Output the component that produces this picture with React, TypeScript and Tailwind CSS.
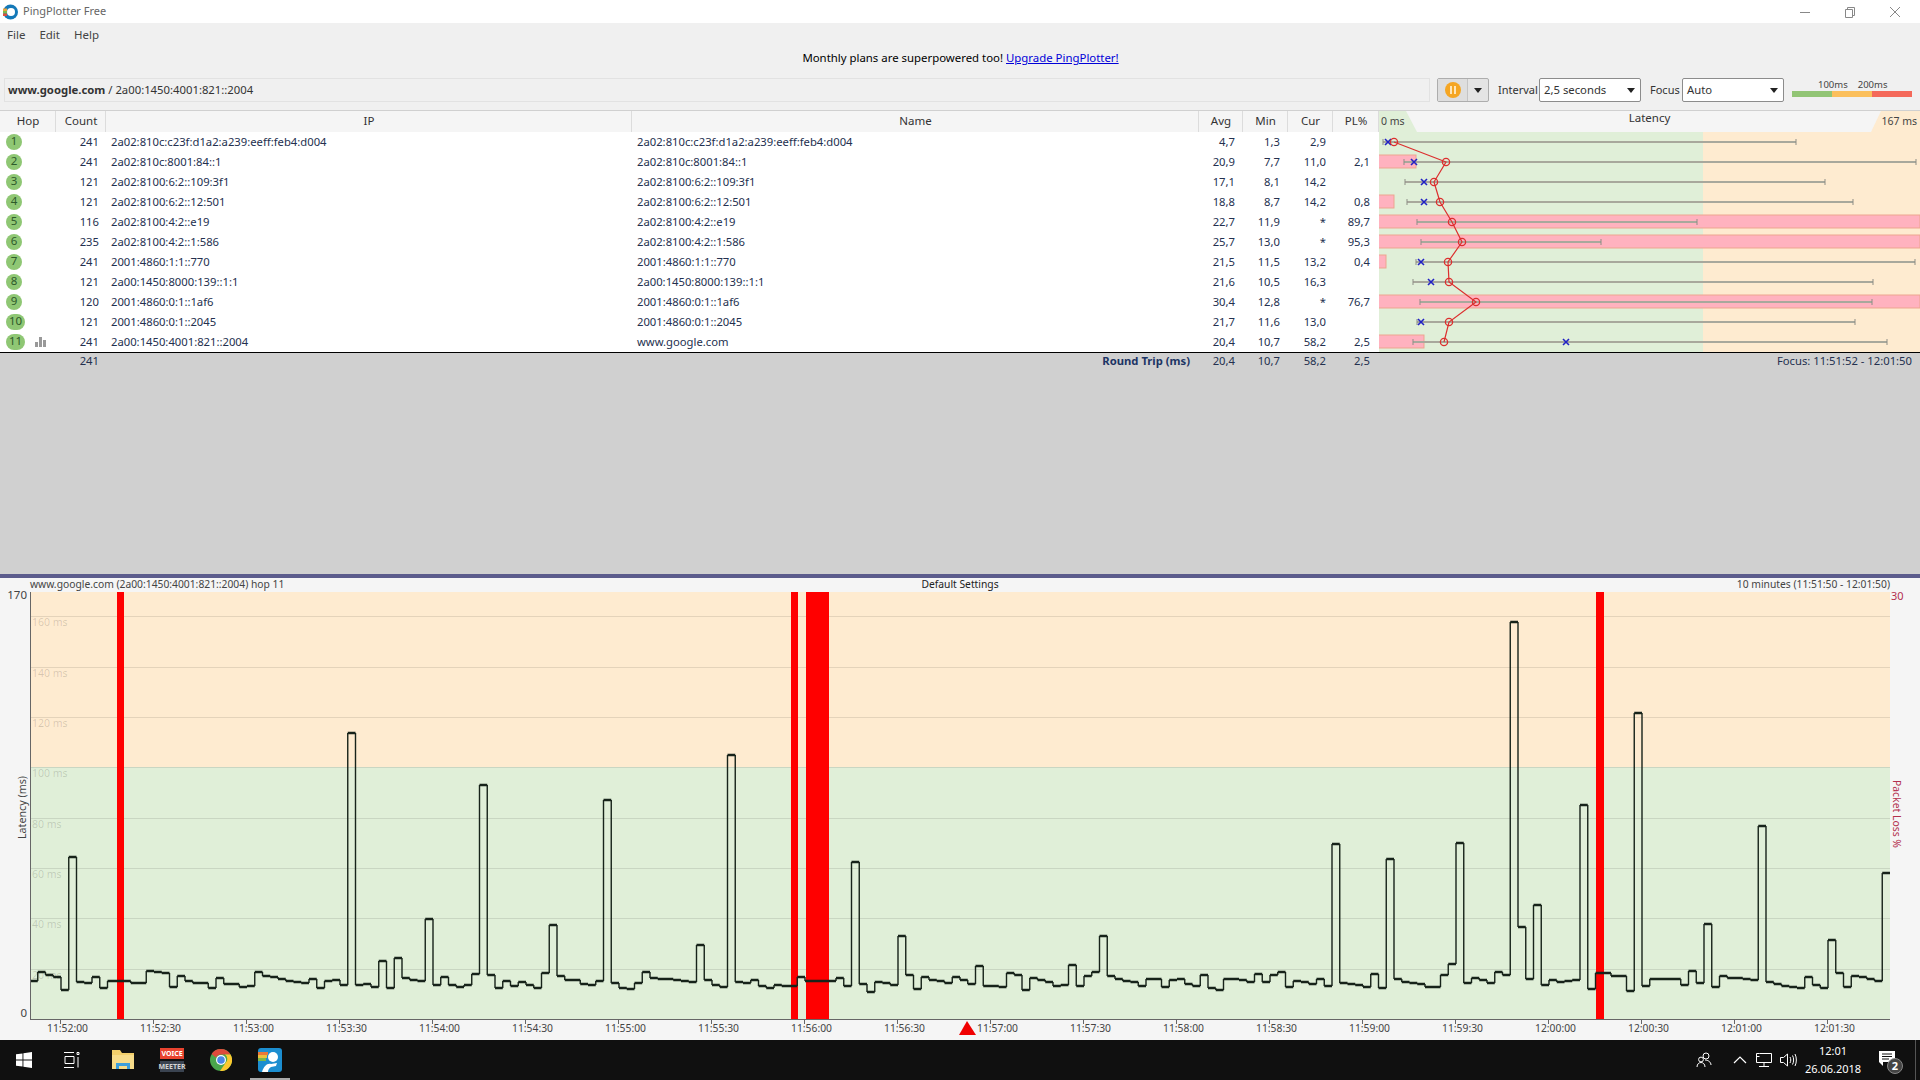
const hops = [
  { hop: 1, count: 241, ip: "2a02:810c:c23f:d1a2:a239:eeff:feb4:d004", name: "2a02:810c:c23f:d1a2:a239:eeff:feb4:d004", avg: "4,7", min: "1,3", cur: "2,9", pl: "" },
  { hop: 2, count: 241, ip: "2a02:810c:8001:84::1", name: "2a02:810c:8001:84::1", avg: "20,9", min: "7,7", cur: "11,0", pl: "2,1" },
  { hop: 3, count: 121, ip: "2a02:8100:6:2::109:3f1", name: "2a02:8100:6:2::109:3f1", avg: "17,1", min: "8,1", cur: "14,2", pl: "" },
  { hop: 4, count: 121, ip: "2a02:8100:6:2::12:501", name: "2a02:8100:6:2::12:501", avg: "18,8", min: "8,7", cur: "14,2", pl: "0,8" },
  { hop: 5, count: 116, ip: "2a02:8100:4:2::e19", name: "2a02:8100:4:2::e19", avg: "22,7", min: "11,9", cur: "*", pl: "89,7" },
  { hop: 6, count: 235, ip: "2a02:8100:4:2::1:586", name: "2a02:8100:4:2::1:586", avg: "25,7", min: "13,0", cur: "*", pl: "95,3" },
  { hop: 7, count: 241, ip: "2001:4860:1:1::770", name: "2001:4860:1:1::770", avg: "21,5", min: "11,5", cur: "13,2", pl: "0,4" },
  { hop: 8, count: 121, ip: "2a00:1450:8000:139::1:1", name: "2a00:1450:8000:139::1:1", avg: "21,6", min: "10,5", cur: "16,3", pl: "" },
  { hop: 9, count: 120, ip: "2001:4860:0:1::1af6", name: "2001:4860:0:1::1af6", avg: "30,4", min: "12,8", cur: "*", pl: "76,7" },
  { hop: 10, count: 121, ip: "2001:4860:0:1::2045", name: "2001:4860:0:1::2045", avg: "21,7", min: "11,6", cur: "13,0", pl: "" },
  { hop: 11, count: 241, ip: "2a00:1450:4001:821::2004", name: "www.google.com", avg: "20,4", min: "10,7", cur: "58,2", pl: "2,5" },
];

// latency column marks, px from the left of the column: min, cur, avg, max, loss bar
const marks = [
  { min: 4, cur: 9, avg: 15, max: 417, bar: 0 },
  { min: 25, cur: 35, avg: 67, max: 537, bar: 37 },
  { min: 26, cur: 45, avg: 55, max: 446, bar: 0 },
  { min: 28, cur: 45, avg: 61, max: 474, bar: 15 },
  { min: 38, cur: -1, avg: 73, max: 318, bar: 541 },
  { min: 42, cur: -1, avg: 83, max: 222, bar: 541 },
  { min: 37, cur: 42, avg: 69, max: 536, bar: 7 },
  { min: 34, cur: 52, avg: 70, max: 494, bar: 0 },
  { min: 41, cur: -1, avg: 97, max: 493, bar: 541 },
  { min: 38, cur: 42, avg: 70, max: 476, bar: 0 },
  { min: 34, cur: 187, avg: 65, max: 508, bar: 45 },
];

// one y per 2.5s sample, page pixels
const samples = [
  981, 972, 975, 977, 990, 857, 982, 983, 977, 988, 981, 981, 981, 983, 983, 971, 972, 973, 987, 976, 981, 983, 983, 988, 978, 984, 984, 987, 986, 972,
  976, 977, 979, 981, 982, 983, 979, 988, 981, 980, 985, 733, 985, 984, 987, 961, 988, 958, 978, 980, 981, 919, 985, 977, 985, 987, 985, 974, 785, 975,
  988, 981, 986, 982, 985, 988, 973, 925, 976, 980, 980, 984, 985, 981, 800, 983, 988, 989, 983, 972, 978, 979, 979, 980, 981, 982, 945, 980, 985, 987,
  755, 982, 983, 980, 986, 988, 985, 986, 986, 977, 981, 981, 981, 981, 978, 986, 862, 984, 992, 982, 983, 985, 936, 975, 989, 977, 980, 981, 983, 977,
  980, 984, 966, 986, 986, 987, 973, 975, 990, 978, 980, 982, 986, 985, 965, 986, 976, 972, 936, 976, 979, 981, 982, 986, 979, 979, 987, 980, 979, 984,
  986, 975, 988, 990, 979, 979, 980, 982, 974, 982, 975, 972, 987, 981, 982, 984, 979, 986, 844, 983, 984, 985, 987, 974, 988, 859, 979, 982, 983, 984,
  987, 987, 975, 964, 843, 983, 978, 980, 983, 972, 975, 622, 927, 979, 905, 985, 980, 982, 981, 980, 805, 989, 973, 973, 976, 976, 991, 713, 986, 979,
  979, 979, 979, 985, 971, 983, 924, 987, 976, 978, 978, 979, 980, 826, 982, 984, 986, 987, 988, 977, 985, 988, 940, 973, 987, 976, 977, 979, 981, 873,
];

const STEP = 7.75;
const yAt = (v: number) => v - 592;
const flats = samples.map((v, i) => `M${i * STEP} ${yAt(v)}H${(i + 1) * STEP}`).join("");
const risers = samples
  .slice(1)
  .map((v, i) => `M${(i + 1) * STEP} ${yAt(samples[i])}V${yAt(v)}`)
  .join("");

const gridLines = [
  { y: 24, label: "160 ms" },
  { y: 75, label: "140 ms" },
  { y: 125, label: "120 ms" },
  { y: 175, label: "100 ms" },
  { y: 226, label: "80 ms" },
  { y: 276, label: "60 ms" },
  { y: 326, label: "40 ms" },
  { y: 377, label: "20 ms" },
];

const lossBars = [
  { x: 87, w: 7 },
  { x: 761, w: 7 },
  { x: 776, w: 23 },
  { x: 1566, w: 8 },
];

const times = [
  "11:52:00", "11:52:30", "11:53:00", "11:53:30", "11:54:00", "11:54:30", "11:55:00", "11:55:30", "11:56:00", "11:56:30",
  "11:57:00", "11:57:30", "11:58:00", "11:58:30", "11:59:00", "11:59:30", "12:00:00", "12:00:30", "12:01:00", "12:01:30",
];

const columns = "grid grid-cols-[56px_50px_526px_567px_44px_45px_45px_46px]";

const Caret = () => (
  <svg width="8" height="5" viewBox="0 0 8 5">
    <path d="M0 0H8L4 5Z" fill="#222" />
  </svg>
);

const AppLogo = ({ size }: { size: number }) => (
  <svg width={size} height={size} viewBox="0 0 16 16">
    <circle cx="8.5" cy="8" r="7.5" fill="#1479b8" />
    <path d="M1 4.5H5V7H1Z" fill="#e8a33a" />
    <path d="M1 7H5V9.5H1Z" fill="#7cb84a" />
    <path d="M1 9.5H5V12H1Z" fill="#d9503f" />
    <circle cx="9" cy="8" r="4" fill="#fff" />
  </svg>
);

const LatencyChart = () => (
  <svg width="541" height="220" className="block">
    <rect width="324" height="220" fill="#e0efd8" />
    <rect x="324" width="217" height="220" fill="#feebd0" />
    {marks.map((m, i) =>
      m.bar > 0 ? (
        <rect key={i} x="-1" y={3 + i * 20} width={m.bar + 1} height="13" fill="#ffb2bf" stroke="#eda58f" />
      ) : null
    )}
    {marks.map((m, i) => (
      <g key={i} stroke="#a8a89c">
        <path d={`M${m.min} ${10 + i * 20}H${m.max}`} strokeWidth="2" />
        <path d={`M${m.min} ${7 + i * 20}v6M${m.max} ${7 + i * 20}v6`} strokeWidth="1" stroke="#8d8d85" />
      </g>
    ))}
    {marks.map((m, i) =>
      m.cur >= 0 ? (
        <path
          key={i}
          d={`M${m.cur - 3} ${7 + i * 20}l6 6m0 -6l-6 6`}
          stroke="#2222c4"
          strokeWidth="1.6"
        />
      ) : null
    )}
    <polyline
      points={marks.map((m, i) => `${m.avg},${10 + i * 20}`).join(" ")}
      fill="none"
      stroke="#dc2f2f"
      strokeWidth="1.2"
    />
    {marks.map((m, i) => (
      <circle key={i} cx={m.avg} cy={10 + i * 20} r="3.6" fill="none" stroke="#dc2f2f" strokeWidth="1.3" />
    ))}
  </svg>
);

const PlotChart = () => (
  <svg width="1860" height="427" className="block overflow-visible">
    <rect width="1860" height="175" fill="#feebd0" />
    <rect y="175" width="1860" height="252" fill="#e0efd8" />
    {gridLines.map((g) => (
      <g key={g.label}>
        <path d={`M0 ${g.y + 0.5}H1860`} stroke="#000" strokeOpacity="0.1" />
        <text x="2" y={g.y + 10} fontSize="10.5" fill="#000" fillOpacity="0.16">
          {g.label}
        </text>
      </g>
    ))}
    {lossBars.map((b) => (
      <rect key={b.x} x={b.x} width={b.w} height="427" fill="#ff0000" />
    ))}
    <path d={risers} stroke="#17231a" strokeWidth="1.4" fill="none" />
    <path d={flats} stroke="#17231a" strokeWidth="2.4" fill="none" />
    <path d="M0.5 0V427" stroke="#666" />
    {times.map((t, i) => (
      <path key={t} d={`M${30.5 + i * 93} 427v5`} stroke="#666" />
    ))}
    <polygon points="937,429 929,443 946,443" fill="#f00000" />
  </svg>
);

const TaskbarIcons = () => (
  <div className="flex items-center h-10 w-[300px] shrink-0">
    <svg width="16" height="16" viewBox="0 0 16 16" className="ml-4">
      <path d="M0 2.3L6.5 1.4V7.6H0ZM7.4 1.3L16 0V7.6H7.4ZM0 8.4H6.5V14.6L0 13.7ZM7.4 8.4H16V16L7.4 14.7Z" fill="#fff" />
    </svg>
    <svg width="16" height="16" viewBox="0 0 16 16" className="ml-8">
      <path d="M0 .5H10M0 15.5H10M1 4.5H10V11.5H1ZM13 .5H15V2.5H13ZM14 5V15.5" stroke="#fff" fill="none" />
    </svg>
    <svg width="22" height="20" viewBox="0 0 22 20" className="ml-8">
      <path d="M0 0H8L10 3H22V19H0Z" fill="#f2cf6b" />
      <path d="M0 5H22V19H0Z" fill="#f7dc8a" />
      <path d="M4 19V13H18V19H15V16H7V19Z" fill="#3c9fdc" />
    </svg>
    <div className="ml-[26px] w-6 h-6 flex flex-col text-[7px] leading-none font-bold text-center shrink-0">
      <div className="h-[11px] bg-[#e8432f] text-white flex items-center justify-center">VOICE</div>
      <div className="h-[2px]" />
      <div className="h-[11px] bg-[#3a4350] text-[#d5d5d5] flex items-center justify-center">MEETER</div>
    </div>
    <svg width="22" height="22" viewBox="0 0 22 22" className="ml-[26px]">
      <circle cx="11" cy="11" r="11" fill="#4aa64c" />
      <path d="M11 0A11 11 0 0 1 20.5 5.5H11A5.5 5.5 0 0 0 6 8.5L1.6 5A11 11 0 0 1 11 0Z" fill="#dd4a3c" />
      <path d="M20.5 5.5A11 11 0 0 1 10 22L15.5 14A5.5 5.5 0 0 0 15 5.5Z" fill="#fbc82f" />
      <circle cx="11" cy="11" r="5" fill="#fff" />
      <circle cx="11" cy="11" r="3.8" fill="#4a86e8" />
    </svg>
    <div className="ml-[18px] h-10 w-10 flex flex-col items-center justify-end shrink-0">
      <svg width="24" height="24" viewBox="0 0 24 24" className="mb-[6px]">
        <rect width="24" height="24" rx="3" fill="#1c8ed0" />
        <path d="M0 4H10V7H0Z" fill="#e8783a" />
        <path d="M0 7H9V10H0Z" fill="#ecc03c" />
        <path d="M0 10H8V13H0Z" fill="#7cb84a" />
        <circle cx="15" cy="9" r="5" fill="#fff" />
        <path d="M4 24C6 18 9 15 13 16L19 15L18 18L13 19C11 20 10 22 10 24Z" fill="#fff" />
      </svg>
      <div className="h-[2px] w-10 bg-[#aaaaaa]" />
    </div>
  </div>
);

const Tray = () => (
  <div className="flex items-center h-10 text-white">
    <svg width="16" height="16" viewBox="0 0 16 16" className="mr-[21px]">
      <circle cx="10" cy="4" r="3" stroke="#fff" fill="none" />
      <circle cx="5" cy="7.5" r="2.4" stroke="#fff" fill="none" />
      <path d="M1 15C1 12 3 10.5 5 10.5S9 12 9 15M9 8C12 8 15 10 15 13" stroke="#fff" fill="none" />
    </svg>
    <svg width="14" height="8" viewBox="0 0 14 8" className="mr-[9px]">
      <path d="M1 7L7 1L13 7" stroke="#fff" fill="none" strokeWidth="1.2" />
    </svg>
    <svg width="16" height="14" viewBox="0 0 16 14" className="mr-2">
      <path d="M3.5 .5H15.5V9.5H.5V.5H3.5ZM8 9.5V13.5M3 13.5H13M.5 3.5H3.5" stroke="#fff" fill="none" />
    </svg>
    <svg width="17" height="14" viewBox="0 0 17 14">
      <path d="M.5 4.5H3.5L7.5 1V13L3.5 9.5H.5ZM10 4C11 6 11 8 10 10M12.5 2.5C14 5 14 9 12.5 11.5M15 1C16.8 4.5 16.8 9.5 15 13" stroke="#fff" fill="none" />
    </svg>
    <div className="w-[72px] text-center text-[11px] leading-[18px]">
      <div>12:01</div>
      <div>26.06.2018</div>
    </div>
    <div className="relative ml-[2px] w-[32px] h-10">
      <svg width="16" height="15" viewBox="0 0 16 15" className="absolute left-[8px] top-[11px]">
        <path d="M0 0H16V11H4V15L0 11Z" fill="#fff" />
        <path d="M3 3H13M3 5.5H13M3 8H10" stroke="#111" />
      </svg>
      <div className="absolute left-[16px] top-[18px] w-4 h-4 rounded-full bg-[#444] border border-[#888] text-[11px] font-bold leading-[14px] text-center">
        2
      </div>
    </div>
    <div className="ml-[12px] w-[1px] h-10 bg-[#555]" />
    <div className="w-1" />
  </div>
);

export default function App() {
  return (
    <div className="w-[1920px] h-[1080px] overflow-hidden flex flex-col bg-[#f0f0f0] text-[11.25px] text-[#24304f] font-['Noto_Sans','Open_Sans',sans-serif]">
      <div className="h-[23px] shrink-0 bg-white flex items-center pl-[2px] text-[#666]">
        <AppLogo size={16} />
        <span className="ml-[5px] text-[11px]">PingPlotter Free</span>
        <div className="ml-auto flex items-center pr-[19px] gap-[33px]">
          <svg width="12" height="12" viewBox="0 0 12 12">
            <path d="M1 6.5H11" stroke="#888" />
          </svg>
          <svg width="12" height="12" viewBox="0 0 12 12">
            <path d="M1.5 3.5H8.5V11.5H1.5ZM3.5 3.5V1.5H10.5V9.5H8.5" stroke="#888" fill="none" />
          </svg>
          <svg width="12" height="12" viewBox="0 0 12 12">
            <path d="M1 1L11 11M11 1L1 11" stroke="#888" />
          </svg>
        </div>
      </div>

      <div className="h-[24px] shrink-0 flex items-center gap-[14px] pl-[7px] text-[#444] text-[11.5px]">
        <span>File</span>
        <span>Edit</span>
        <span>Help</span>
      </div>

      <div className="h-[21px] shrink-0 flex items-center justify-center text-[11.4px] text-black pl-[1px]">
        <span>Monthly plans are superpowered too!&nbsp;</span>
        <span className="text-[#0000d8] underline">Upgrade PingPlotter!</span>
      </div>

      <div className="h-[42px] shrink-0 pt-[10px] pl-[4px] flex items-start">
        <div className="w-[1426px] h-6 border border-[#e2e2e2] flex items-center pl-[3px] text-[11.3px] text-[#333]">
          <span className="font-bold">www.google.com</span>
          <span>&nbsp;/ 2a00:1450:4001:821::2004</span>
        </div>
        <div className="ml-[7px] w-[52px] h-6 flex border border-[#adadad] rounded-[2px] bg-[#e4e4e4]">
          <div className="w-[30px] flex items-center justify-center border-r border-[#c4c4c4] bg-[#dedede]">
            <div className="w-4 h-4 rounded-full bg-[#f5a623] flex items-center justify-center gap-[2px]">
              <div className="w-[2px] h-2 bg-[#ffe6b8]" />
              <div className="w-[2px] h-2 bg-[#ffe6b8]" />
            </div>
          </div>
          <div className="flex-1 flex items-center justify-center">
            <Caret />
          </div>
        </div>
        <div className="ml-[9px] w-[41px] h-6 flex items-center text-[#333] text-[11px]">Interval</div>
        <div className="w-[102px] h-6 bg-white border border-[#8c8c8c] rounded-[2px] flex items-center justify-between pl-[4px] pr-[5px] text-[11.3px] text-[#333]">
          <span>2,5 seconds</span>
          <Caret />
        </div>
        <div className="ml-[9px] w-[32px] h-6 flex items-center text-[#333] text-[11px]">Focus</div>
        <div className="w-[102px] h-6 bg-white border border-[#8c8c8c] rounded-[2px] flex items-center justify-between pl-[4px] pr-[5px] text-[11.3px] text-[#333]">
          <span>Auto</span>
          <Caret />
        </div>
        <div className="ml-[8px] w-[120px] h-6 flex flex-col justify-end pb-[5px]">
          <div className="flex h-[13px] text-[9.5px] leading-[13px] text-[#444] pl-[26px] gap-[10px]">
            <span>100ms</span>
            <span>200ms</span>
          </div>
          <div className="flex h-[6px]">
            <div className="w-10 bg-[#92c575]" />
            <div className="w-10 bg-[#fbbf5c]" />
            <div className="w-10 bg-[#f4695a]" />
          </div>
        </div>
      </div>

      <div className="h-[22px] shrink-0 border-t border-[#d0d0d0] bg-[#f5f5f5] flex">
        <div className={columns}>
          {["Hop", "Count", "IP", "Name", "Avg", "Min", "Cur", "PL%"].map((h) => (
            <div key={h} className="h-[21px] flex items-center justify-center pl-[1px] pb-[2px] border-r border-[#dcdcdc] text-[#333] text-[11.5px]">
              {h}
            </div>
          ))}
        </div>
        <div className="relative flex-1 h-[21px] flex justify-center text-[#333] text-[11.5px] leading-[14px]">
          <svg width="541" height="21" className="absolute inset-0">
            <polygon points="0,0 27,0 38,21 0,21" fill="#e0efd8" />
            <polygon points="541,0 502,0 492,21 541,21" fill="#feebd0" />
          </svg>
          <span className="relative">Latency</span>
          <span className="absolute left-[2px] top-[3px] text-[10.5px] text-[#444]">0 ms</span>
          <span className="absolute right-[3px] top-[3px] text-[10.5px] text-[#444]">167 ms</span>
        </div>
      </div>

      <div className="h-[221px] shrink-0 flex border-b border-black bg-white">
        <div className="w-[1379px]">
          {hops.map((r) => (
            <div key={r.hop} className={`${columns} h-5 items-center`}>
              <div className="flex items-center pl-[6px] relative">
                <div className={`h-4 ${r.hop > 9 ? "w-[19px]" : "w-4"} rounded-full bg-[#8fc774] text-[#2d5a2a] text-center text-[11.5px] leading-[13px]`}>
                  {r.hop}
                </div>
                {r.hop === 11 && (
                  <svg width="11" height="10" viewBox="0 0 11 10" className="ml-[10px]">
                    <path d="M0 5H3V10H0ZM4 0H7V10H4ZM8 3H11V10H8Z" fill="#999" />
                  </svg>
                )}
              </div>
              <div className="text-right pr-[7px]">{r.count}</div>
              <div className="pl-[5px]">{r.ip}</div>
              <div className="pl-[5px]">{r.name}</div>
              <div className="text-right pr-[8px]">{r.avg}</div>
              <div className="text-right pr-[8px]">{r.min}</div>
              <div className="text-right pr-[7px]">{r.cur}</div>
              <div className="text-right pr-[9px]">{r.pl}</div>
            </div>
          ))}
        </div>
        <LatencyChart />
      </div>

      <div className="flex-1 bg-[#d0d0d0] flex items-start">
        <div className={`${columns} h-[16px] items-center w-[1379px]`}>
          <div />
          <div className="text-right pr-[7px]">241</div>
          <div />
          <div className="text-right pr-[9px] font-bold text-[#1c3464]">Round Trip (ms)</div>
          <div className="text-right pr-[8px]">20,4</div>
          <div className="text-right pr-[8px]">10,7</div>
          <div className="text-right pr-[7px]">58,2</div>
          <div className="text-right pr-[9px]">2,5</div>
        </div>
        <div className="flex-1 h-[16px] flex items-center justify-end pr-2">Focus: 11:51:52 - 12:01:50</div>
      </div>

      <div className="h-[4px] shrink-0 bg-[#5c5c8c]" />

      <div className="shrink-0 bg-[#f5f5f5] text-[#444]">
        <div className="h-[14px] relative flex justify-between pl-[30px] pr-[30px] text-[10.3px] leading-[13px]">
          <span>www.google.com (2a00:1450:4001:821::2004) hop 11</span>
          <span className="absolute left-0 right-0 text-center text-[#222]">Default Settings</span>
          <span>10 minutes (11:51:50 - 12:01:50)</span>
        </div>
        <div className="flex h-[428px]">
          <div className="w-[30px] relative flex flex-col justify-between items-end pr-[3px] pb-[2px] -mt-[3px] text-[11.5px] leading-none">
            <span>170</span>
            <span className="absolute left-[17px] top-[187px] [writing-mode:vertical-rl] rotate-180 text-[10.7px]">Latency (ms)</span>
            <span>0</span>
          </div>
          <div className="w-[1860px] h-[428px] border-b border-[#666]">
            <PlotChart />
          </div>
          <div className="flex-1 relative pl-[1px] text-[#b4314f] text-[11px] leading-none -mt-[2px]">
            <span>30</span>
            <span className="absolute left-[2px] top-[190px] [writing-mode:vertical-rl] text-[10.4px]">Packet Loss %</span>
          </div>
        </div>
        <div className="h-[20px] flex pl-[21px] text-[10.3px] leading-[14px] pt-[1px]">
          {times.map((t) => (
            <div key={t} className="w-[93px] text-center">
              {t}
            </div>
          ))}
        </div>
      </div>

      <div className="h-10 shrink-0 bg-[#101010] flex items-center justify-between">
        <TaskbarIcons />
        <Tray />
      </div>
    </div>
  );
}
